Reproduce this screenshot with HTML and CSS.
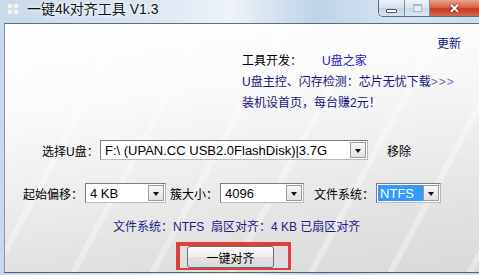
FILE: index.html
```html
<!DOCTYPE html>
<html lang="zh-CN">
<head>
<meta charset="utf-8">
<title>一键4k对齐工具 V1.3</title>
<link rel="stylesheet" href="styles.css">
</head>
<body>
<div class="window">
  <header class="titlebar">
    <span class="app-icon">
      <svg width="16" height="16" viewBox="0 0 16 16">
        <g fill="#f4f6f4" stroke="#c9cfc9" stroke-width="0.6">
          <circle cx="5" cy="5" r="3"/>
          <circle cx="11" cy="5" r="3"/>
          <circle cx="5" cy="11" r="3"/>
          <circle cx="11" cy="11" r="3"/>
        </g>
        <circle cx="8" cy="8" r="1.6" fill="#dfe4df"/>
      </svg>
    </span>
    <span class="title">一键4k对齐工具 V1.3</span>
    <div class="caption-buttons">
      <span class="cap cap-min"><i class="min-glyph"></i></span>
      <span class="cap cap-max"><i class="max-glyph"></i></span>
      <span class="cap cap-close">✕</span>
    </div>
  </header>
  <main class="client">
    <section class="info">
      <div class="update-line"><span class="link-dark">更新</span></div>
      <p class="info-line">工具开发：<span class="link-blue">U盘之家</span></p>
      <p class="info-line link-dark">U盘主控、闪存检测：芯片无忧下载<span class="arrows">&gt;&gt;&gt;</span></p>
      <p class="info-line link-dark">装机设首页，每台赚2元！</p>
    </section>

    <div class="row row-drive">
      <span class="label label-drive">选择U盘：</span>
      <div class="combo combo-drive">
        <span class="combo-text">F:\ (UPAN.CC USB2.0FlashDisk)|3.7G</span>
        <span class="combo-btn"><i class="arrow"></i></span>
      </div>
      <span class="remove">移除</span>
    </div>

    <div class="row row-opts">
      <span class="label">起始偏移：</span>
      <div class="combo combo-offset">
        <span class="combo-text">4 KB</span>
        <span class="combo-btn"><i class="arrow"></i></span>
      </div>
      <span class="label label-cluster">簇大小：</span>
      <div class="combo combo-cluster">
        <span class="combo-text">4096</span>
        <span class="combo-btn"><i class="arrow"></i></span>
      </div>
      <span class="label label-fs">文件系统：</span>
      <div class="combo combo-fs">
        <span class="combo-text combo-selected">NTFS</span>
        <span class="combo-btn"><i class="arrow"></i></span>
      </div>
    </div>

    <p class="status">文件系统：NTFS&nbsp; 扇区对齐：4 KB 已扇区对齐</p>

    <div class="action">
      <div class="highlight">
        <button class="btn-align" type="button">一键对齐</button>
      </div>
    </div>
  </main>
</div>
</body>
</html>
```

FILE: styles.css
```css
* { box-sizing: border-box; margin: 0; padding: 0; }

html, body { width: 479px; height: 275px; overflow: hidden; }

body {
  font-family: "Liberation Sans", "Noto Sans CJK SC", sans-serif;
  font-size: 12px;
  color: #000;
  background: #d3e1ef;
}

.window {
  height: 275px;
  display: flex;
  flex-direction: column;
  padding: 0 0 2px 4px;
  background: linear-gradient(to right, #c7d9eb 0%, #d9e6f2 30%, #eef3f9 48%, #bfd3e8 66%, #d7e5f2 84%, #c9dbed 100%);
}

/* ---------- title bar ---------- */
.titlebar {
  height: 23px;
  flex: none;
  display: flex;
  align-items: flex-start;
  margin-left: -4px;
}

.app-icon {
  width: 16px;
  height: 16px;
  margin: 1px 0 0 5px;
  opacity: 0.9;
}

.title {
  margin-left: 6px;
  font-size: 14px;
  line-height: 18px;
  color: #111;
  text-shadow: 0 0 6px #fff, 0 0 3px #fff;
}

.caption-buttons {
  margin-left: auto;
  display: flex;
  height: 17px;
  border: 1px solid #5b6b80;
  border-top: none;
  border-right: none;
  border-radius: 0 0 0 5px;
  overflow: hidden;
}

.cap {
  display: flex;
  align-items: center;
  justify-content: center;
}

.cap-min {
  width: 26px;
  background: linear-gradient(#eef3f9, #d4e0ed 50%, #c2d2e4 51%, #d6e3f0);
  border-right: 1px solid #7f8fa4;
}

.min-glyph {
  width: 11px;
  height: 4px;
  margin-top: 5px;
  background: #fff;
  border: 1px solid #4c5666;
  border-radius: 1px;
}

.cap-max {
  width: 25px;
  background: linear-gradient(#eef3f9, #d9e4ef 50%, #c9d8e8 51%, #dae6f1);
  border-right: 1px solid #7f8fa4;
}

.max-glyph {
  width: 9px;
  height: 8px;
  border: 1px solid #a9b6c6;
  border-top-width: 2px;
  background: #e6edf5;
}

.cap-close {
  width: 49px;
  color: #fff;
  font-size: 13px;
  font-weight: bold;
  text-shadow: 0 0 2px #5a1a10, 0 0 1px #5a1a10;
  background: linear-gradient(#eba18f, #d9644a 45%, #c4391f 55%, #d8694c);
}

/* ---------- client area ---------- */
.client {
  flex: 1;
  border-top: 1px solid #5f6b7a;
  border-left: 1px solid #8796ab;
  border-bottom: 1px solid #5c5c5c;
  background:
    repeating-linear-gradient(118deg, rgba(255,255,255,0) 0 34px, rgba(255,255,255,0.35) 34px 40px, rgba(255,255,255,0) 40px 70px),
    linear-gradient(172deg, #ffffff 0%, #fafafa 30%, #ededed 58%, #e2e2e2 78%, #d9d9d9 100%);
  display: flex;
  flex-direction: column;
}

.info {
  padding: 13px 18px 0 237px;
}

.update-line {
  text-align: right;
  line-height: 14px;
  font-size: 12px;
}

.info-line {
  font-size: 12px;
  line-height: 21px;
}

.link-dark { color: #14147a; }
.link-blue { color: #1b1bc8; margin-left: 20px; }
.arrows { color: #6a74b6; letter-spacing: 1px; }

.row {
  display: flex;
  align-items: center;
  height: 20px;
}

.row-drive {
  margin-top: 26px;
  padding-left: 37px;
}

.row-opts {
  margin-top: 23px;
  padding-left: 18px;
}

.label {
  font-size: 12px;
  white-space: nowrap;
}

.label-drive { width: 58px; }
.label-cluster { margin-left: 4px; }
.label-fs { margin-left: 10px; }

.combo {
  display: flex;
  align-items: center;
  height: 20px;
  background: #fff;
  border: 1px solid;
  border-color: #7c7c7c #b9b9b9 #b9b9b9 #7c7c7c;
  padding: 1px;
  margin-left: 2px;
}

.combo-text {
  padding-left: 3px;
  font-size: 13px;
  white-space: nowrap;
}

.combo-btn {
  margin-left: auto;
  width: 16px;
  height: 16px;
  flex: none;
  display: flex;
  align-items: center;
  justify-content: center;
  background: linear-gradient(#f7f7f7, #e1e1e1);
  border: 1px solid #9c9c9c;
}

.arrow {
  width: 0;
  height: 0;
  border-left: 3.5px solid transparent;
  border-right: 3.5px solid transparent;
  border-top: 4px solid #111;
  margin-top: 1px;
}

.combo-drive { width: 268px; margin-left: 0; }
.combo-offset { width: 81px; }
.combo-cluster { width: 84px; }
.combo-fs { width: 65px; }

.combo-selected {
  align-self: stretch;
  display: flex;
  align-items: center;
  width: 46px;
  padding-left: 2px;
  background: #3399ff;
  color: #fff;
}

.remove {
  margin-left: 19px;
  font-size: 12px;
}

.status {
  margin-top: 14px;
  padding-left: 108px;
  font-size: 12px;
  line-height: 20px;
  color: #1c1c86;
  white-space: pre;
}

.action {
  margin-top: 5px;
  padding-left: 171px;
}

.highlight {
  width: 115px;
  height: 28px;
  border: 4px solid #df3f3c;
  border-right-width: 3px;
  border-bottom-width: 2px;
  padding-left: 7px;
}

.btn-align {
  display: block;
  width: 87px;
  height: 22px;
  font-family: "Liberation Sans", "Noto Sans CJK SC", sans-serif;
  font-size: 12px;
  color: #000;
  background: linear-gradient(#fbfbfb, #efefef 50%, #e2e2e2 51%, #d9d9d9);
  border: 1px solid #707070;
  border-radius: 3px;
}
```
